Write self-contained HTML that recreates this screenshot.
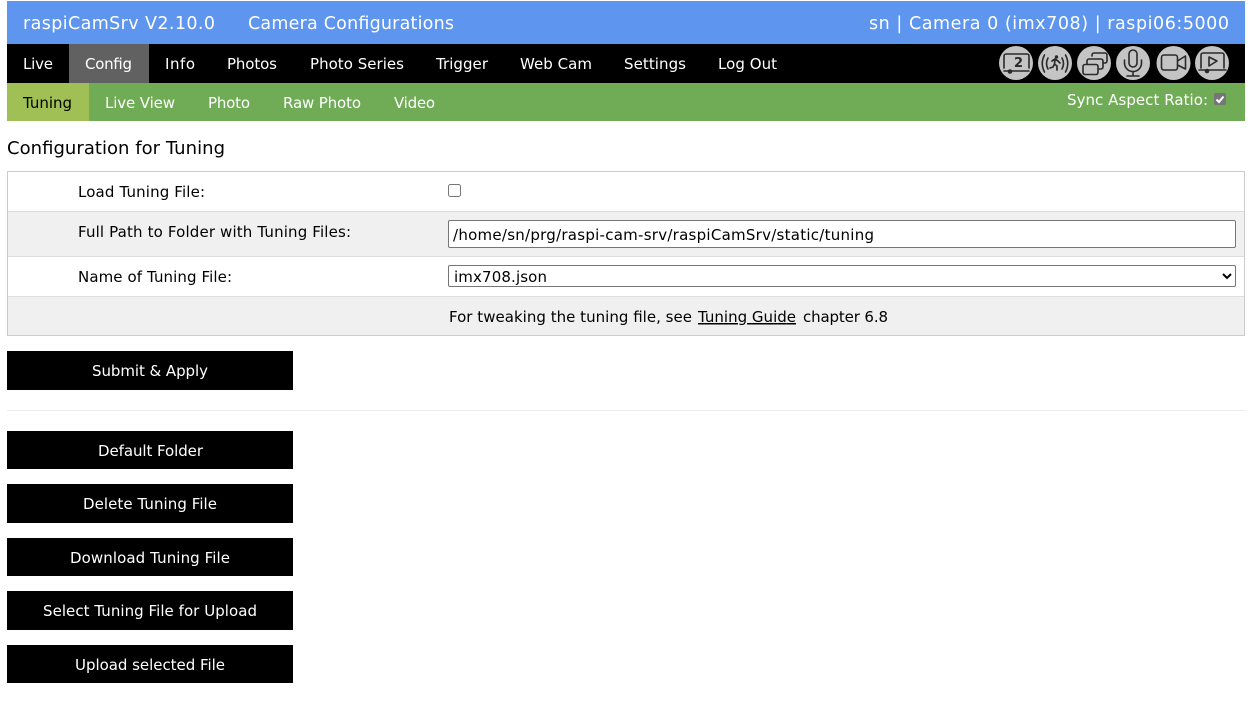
<!DOCTYPE html>
<html lang="en"><head><meta charset="utf-8"><title>raspiCamSrv</title>
<style>
html,body{margin:0;padding:0;background:#fff;width:1252px;height:704px;overflow:hidden}
.b{position:absolute}
input,select{position:absolute;box-sizing:border-box;margin:0;background:#fff;border:1px solid #767676;border-radius:2px;color:#000;padding:0;outline:0}
svg{position:absolute;left:0;top:0}
text{font-family:"DejaVu Sans","Liberation Sans",sans-serif;font-size:15px}
.w{fill:#fff}.k{fill:#000}
.i{fill:none;stroke:#2a2a2a;stroke-width:1.6;stroke-linejoin:round;stroke-linecap:round}
</style></head><body>
<div class="b" style="left:7px;top:1px;width:1238px;height:43px;background:#5e95ef"></div>
<div class="b" style="left:7px;top:44px;width:1238px;height:39px;background:#000"></div>
<div class="b" style="left:69px;top:44px;width:80px;height:39px;background:#616161"></div>
<div class="b" style="left:7px;top:83px;width:1238px;height:38px;background:#70ab56"></div>
<div class="b" style="left:7px;top:83px;width:82px;height:38px;background:#a0c055"></div>

<div class="b" style="left:7px;top:171px;width:1236px;height:163px;border:1px solid #ccc;background:#fff"></div>
<div class="b" style="left:8px;top:211px;width:1236px;height:46px;background:#f0f0f0;border-top:1px solid #ddd;border-bottom:1px solid #ddd;box-sizing:border-box"></div>
<div class="b" style="left:8px;top:296px;width:1236px;height:39px;background:#f0f0f0;border-top:1px solid #ddd;box-sizing:border-box"></div>

<input type="checkbox" style="left:448px;top:184px;width:13px;height:13px">
<input type="text" value="" style="left:448px;top:220px;width:788px;height:28px">
<select style="left:448px;top:265px;width:788px;height:22px"><option>&nbsp;</option></select>

<div class="b" style="left:7px;top:351px;width:286px;height:39px;background:#000"></div>
<div class="b" style="left:7px;top:410px;width:1238px;height:1px;background:#eee"></div>
<div class="b" style="left:7px;top:431px;width:286px;height:38px;background:#000"></div>
<div class="b" style="left:7px;top:484px;width:286px;height:39px;background:#000"></div>
<div class="b" style="left:7px;top:538px;width:286px;height:38px;background:#000"></div>
<div class="b" style="left:7px;top:591px;width:286px;height:39px;background:#000"></div>
<div class="b" style="left:7px;top:645px;width:286px;height:38px;background:#000"></div>

<svg width="1252" height="704" viewBox="0 0 1252 704" xmlns="http://www.w3.org/2000/svg">
<g class="w">
<text style="font-size:17.5px" x="23" y="29" textLength="192">raspiCamSrv V2.10.0</text>
<text style="font-size:17.5px" x="248" y="29" textLength="206">Camera Configurations</text>
<text style="font-size:17.5px" x="869" y="29" textLength="360">sn | Camera 0 (imx708) | raspi06:5000</text>
</g>
<g class="w">
<text x="23" y="69" textLength="30">Live</text>
<text x="85" y="69" textLength="47">Config</text>
<text x="165" y="69" textLength="30">Info</text>
<text x="227" y="69" textLength="50">Photos</text>
<text x="310" y="69" textLength="94">Photo Series</text>
<text x="436" y="69" textLength="52">Trigger</text>
<text x="520" y="69" textLength="72">Web Cam</text>
<text x="624" y="69" textLength="62">Settings</text>
<text x="718" y="69" textLength="59">Log Out</text>
<text x="105" y="108" textLength="70">Live View</text>
<text x="208" y="108" textLength="42">Photo</text>
<text x="283" y="108" textLength="78">Raw Photo</text>
<text x="394" y="108" textLength="41">Video</text>
<text x="1067" y="105" textLength="141">Sync Aspect Ratio:</text>
<text x="92" y="376" textLength="116">Submit &amp; Apply</text>
<text x="98" y="456" textLength="105">Default Folder</text>
<text x="83" y="509" textLength="134">Delete Tuning File</text>
<text x="70" y="563" textLength="160">Download Tuning File</text>
<text x="43" y="616" textLength="214">Select Tuning File for Upload</text>
<text x="75" y="670" textLength="150">Upload selected File</text>
</g>
<g class="k">
<text x="23" y="108" textLength="49">Tuning</text>
<text style="font-size:18px" x="7" y="154" textLength="218">Configuration for Tuning</text>
<text x="78" y="197" textLength="127">Load Tuning File:</text>
<text x="78" y="237" textLength="273">Full Path to Folder with Tuning Files:</text>
<text x="78" y="282" textLength="154">Name of Tuning File:</text>
<text x="453" y="240" textLength="421">/home/sn/prg/raspi-cam-srv/raspiCamSrv/static/tuning</text>
<text x="454" y="282" textLength="93">imx708.json</text>
<text x="449" y="322" textLength="243">For tweaking the tuning file, see</text>
<text x="698" y="322" textLength="98" text-decoration="underline">Tuning Guide</text>
<text x="803" y="322" textLength="85">chapter 6.8</text>
</g>

<rect x="1214" y="93" width="12" height="12" rx="2" fill="#767676"/>
<path d="M1216.5 99.5l2.5 2.5 4.5-5.5" fill="none" stroke="#fff" stroke-width="2"/>

<g fill="#c4c4c4">
<circle cx="1016" cy="63" r="17"/><circle cx="1055" cy="63" r="17"/><circle cx="1094" cy="63" r="17"/>
<circle cx="1133" cy="63" r="17"/><circle cx="1173.5" cy="63" r="17"/><circle cx="1212" cy="63" r="17"/>
</g>
<g transform="translate(1016 63)">
<path class="i" d="M-12 5v-12a2 2 0 0 1 2-2h21a2 2 0 0 1 2 2v12"/>
<path class="i" d="M-12 8H13"/><circle cx="-6" cy="8.500" r="2.300" fill="#2a2a2a"/>
<text x="-2" y="4" style="font-size:13px;font-weight:bold" fill="#2a2a2a">2</text>
</g>
<g transform="translate(1055 63)">
<path class="i" d="M-7-5Q-10 .5-7 6M-10.500-8Q-15 .5-10.500 9M7-5Q10 .5 7 6M10.500-8Q15 .5 10.500 9"/>
<circle cx="1.500" cy="-6" r="1.700" fill="#2a2a2a"/>
<path class="i" style="stroke-width:1.700" d="M-3-2 0-4 3-2 5 0M0-4-.5 1 2 3 2 7M-.5 1-2 4-5 5"/>
</g>
<g transform="translate(1094 63)">
<path class="i" d="M-2-7v-1a2 2 0 0 1 2-2h11a2 2 0 0 1 2 2v6a2 2 0 0 1-2 2h-2"/>
<path class="i" d="M-7 1v-3a2 2 0 0 1 2-2h12a2 2 0 0 1 2 2v6a2 2 0 0 1-2 2H5"/>
<rect class="i" x="-11" y="1.500" width="15" height="10" rx="2"/>
</g>
<g transform="translate(1133 63)">
<rect class="i" x="-4" y="-13" width="8" height="17" rx="4"/>
<path class="i" d="M-8.500-3v3a8.500 8.500 0 0 0 17 0v-3M0 8.500v4.500M-6 13h12"/>
</g>
<g transform="translate(1173.500 63)">
<rect class="i" x="-12" y="-8" width="16" height="15" rx="2.500"/>
<path class="i" d="M4-2 12-7V6L4 2"/>
</g>
<g transform="translate(1212 63)">
<path class="i" d="M-11 5v-13a2 2 0 0 1 2-2h19a2 2 0 0 1 2 2v13"/>
<path class="i" d="M-3-6 5-2-3 3Z"/>
<path class="i" d="M-13 7H14"/><circle cx="-5" cy="8" r="2.300" fill="#2a2a2a"/>
</g>
</svg>
</body></html>
